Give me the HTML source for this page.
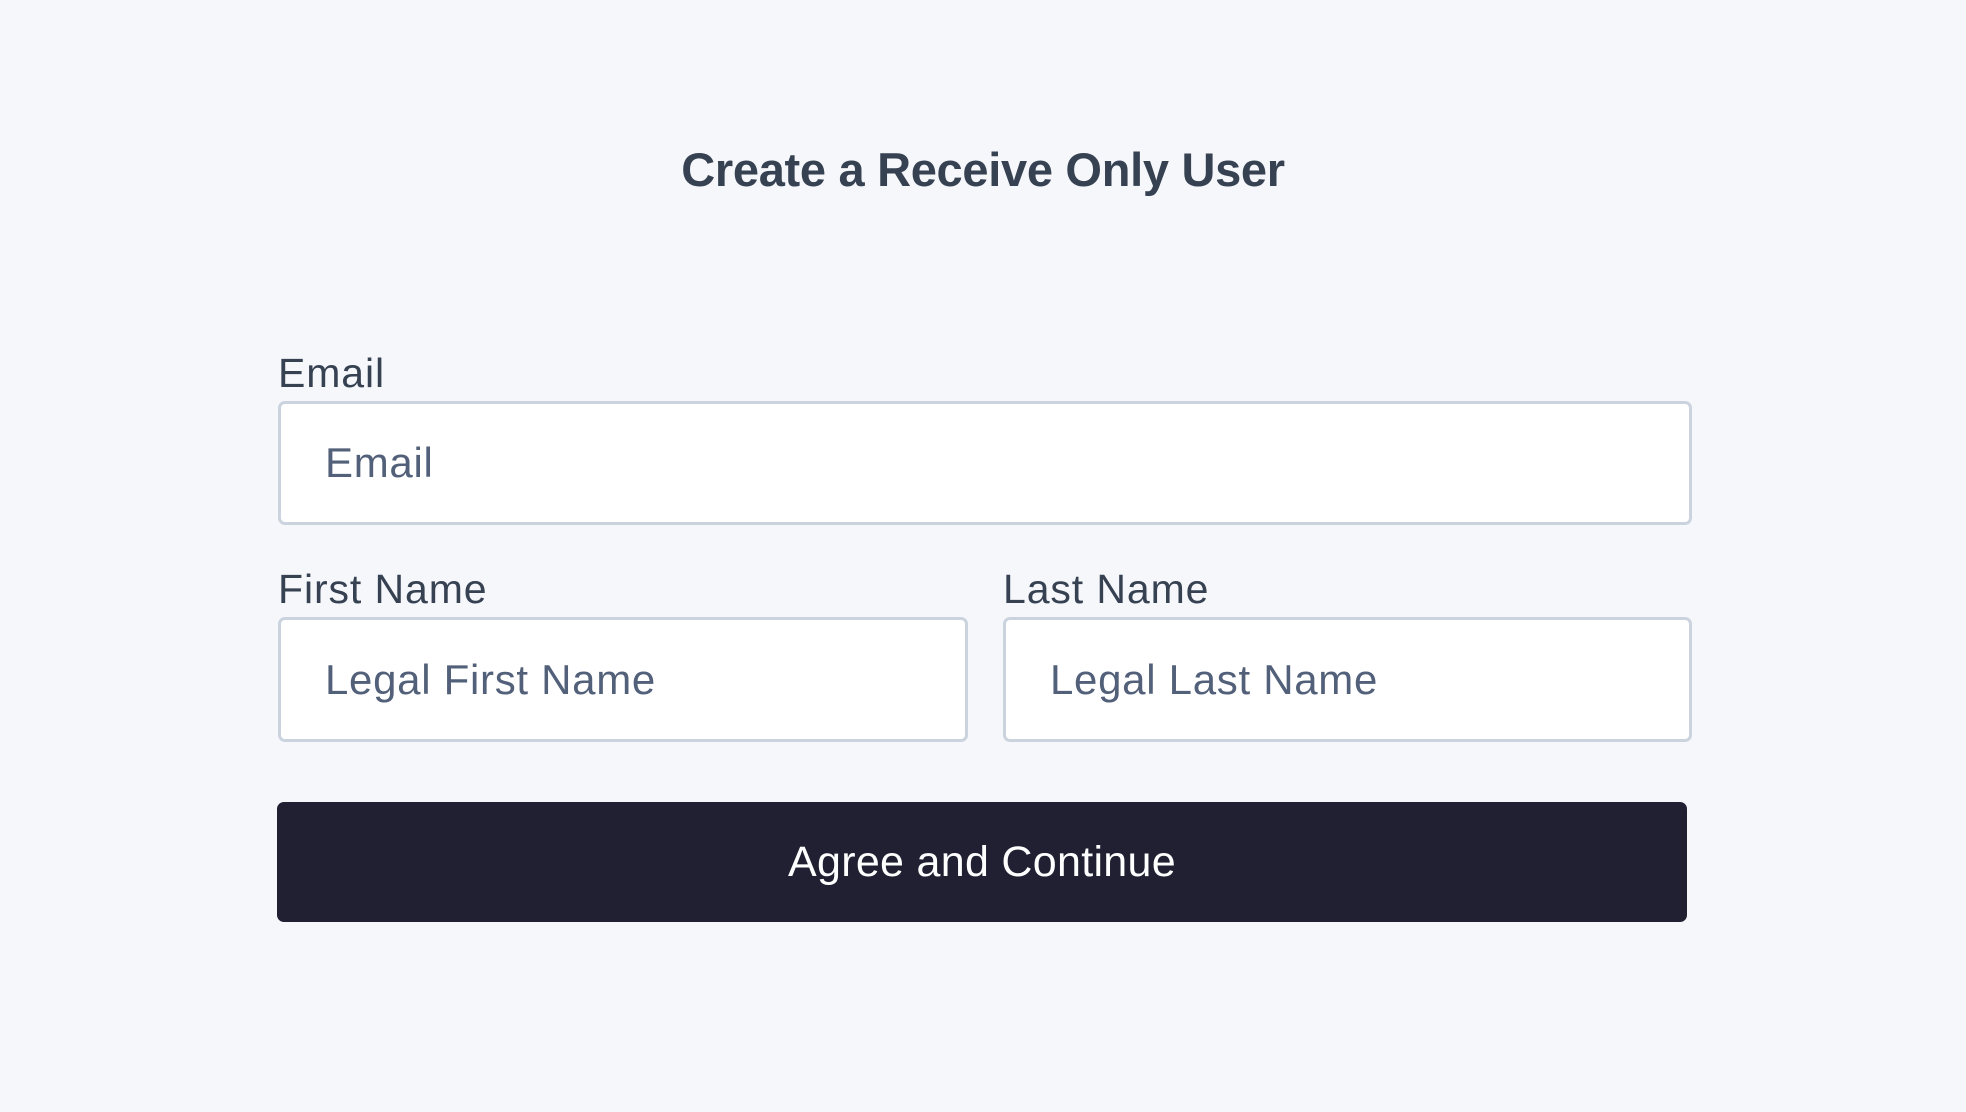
<!DOCTYPE html>
<html><head><meta charset="utf-8"><style>
*{box-sizing:border-box;margin:0;padding:0}
body{width:1966px;height:1112px;background:#f5f7fb;font-family:"Liberation Sans",Arial,sans-serif;position:relative;overflow:hidden;color:#364152}
.t{position:absolute;left:0;width:1966px;top:141px;text-align:center;font-weight:bold;font-size:47px;letter-spacing:-0.3px;line-height:58px;color:#364152}
.l{position:absolute;font-size:41px;line-height:46px;color:#364152;letter-spacing:0.9px}
.i{position:absolute;background:#fff;border:3px solid #cbd3de;border-radius:7px;font-size:42px;color:#526079;padding-left:44px;display:flex;align-items:center;letter-spacing:0.7px}
.b{position:absolute;left:277px;top:802px;width:1410px;height:120px;background:#212033;border-radius:7px;color:#fff;font-size:43px;display:flex;align-items:center;justify-content:center;letter-spacing:0.3px}
</style></head><body>
<div class="t">Create a Receive Only User</div>
<div class="l" style="left:278px;top:350px">Email</div>
<div class="i" style="left:278px;top:401px;width:1414px;height:124px">Email</div>
<div class="l" style="left:278px;top:566px">First Name</div>
<div class="i" style="left:278px;top:617px;width:690px;height:125px">Legal First Name</div>
<div class="l" style="left:1003px;top:566px">Last Name</div>
<div class="i" style="left:1003px;top:617px;width:689px;height:125px">Legal Last Name</div>
<div class="b">Agree and Continue</div>
</body></html>
